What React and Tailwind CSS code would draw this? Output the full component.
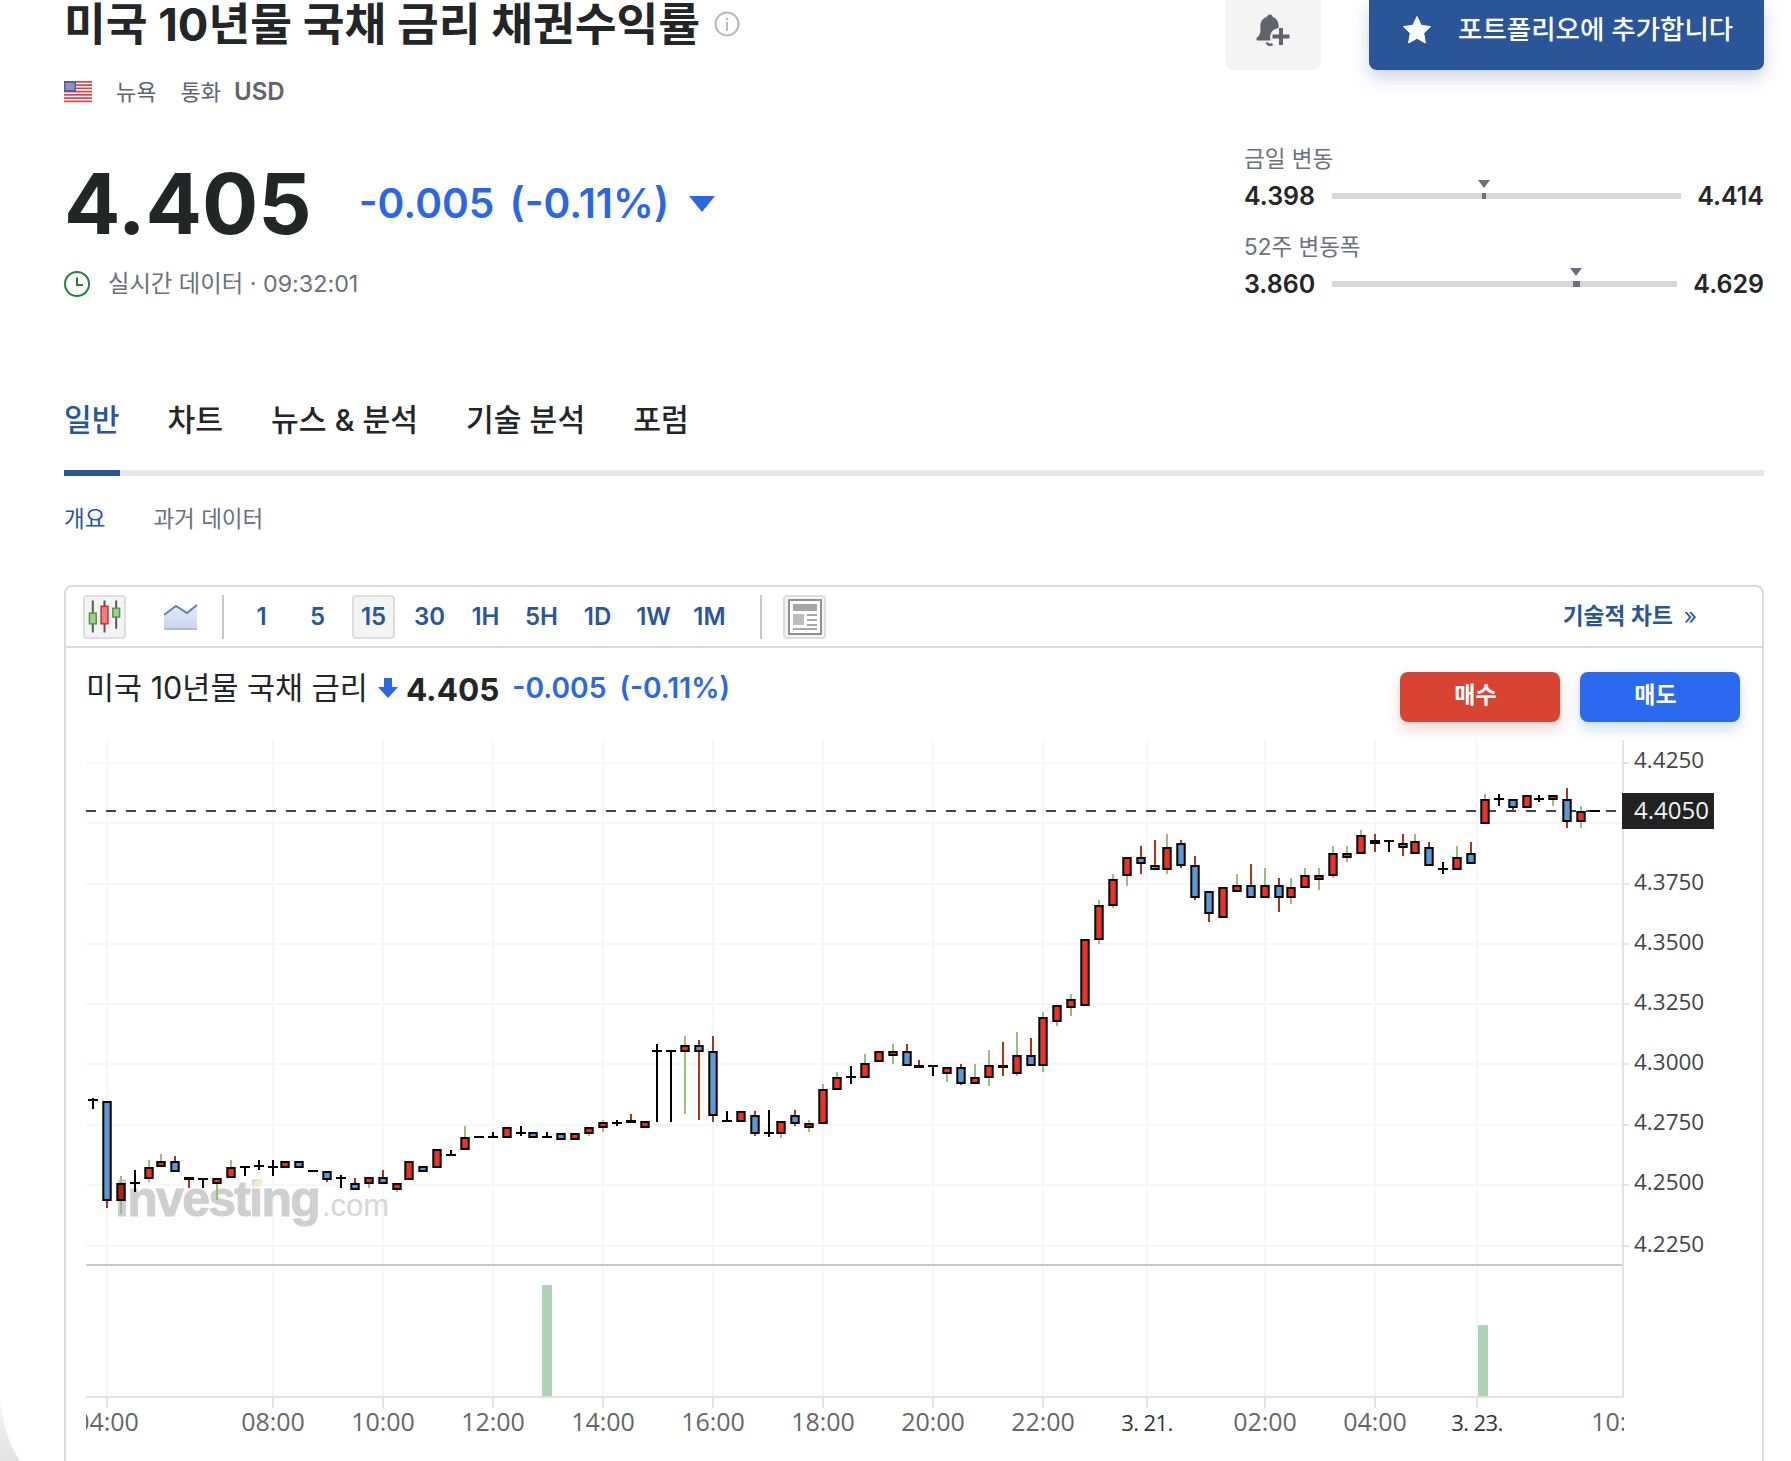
const tabs = [
  { label: '일반', active: true },
  { label: '차트' },
  { label: '뉴스 & 분석' },
  { label: '기술 분석' },
  { label: '포럼' }
]

const intervals = ['1', '5', '15', '30', '1H', '5H', '1D', '1W', '1M']

const yTicks = [
  { label: '4.4250', y: 763, dy: 5 },
  { label: '4.3750', y: 884, dy: 6 },
  { label: '4.3500', y: 944, dy: 6 },
  { label: '4.3250', y: 1004, dy: 6 },
  { label: '4.3000', y: 1064, dy: 6 },
  { label: '4.2750', y: 1125, dy: 5 },
  { label: '4.2500', y: 1185, dy: 5 },
  { label: '4.2250', y: 1246, dy: 6 }
]

const xTicks = [
  { label: '04:00', x: 107 },
  { label: '08:00', x: 273 },
  { label: '10:00', x: 383 },
  { label: '12:00', x: 493 },
  { label: '14:00', x: 603 },
  { label: '16:00', x: 713 },
  { label: '18:00', x: 823 },
  { label: '20:00', x: 933 },
  { label: '22:00', x: 1043 },
  { label: '3. 21.', x: 1147 },
  { label: '02:00', x: 1265 },
  { label: '04:00', x: 1375 },
  { label: '3. 23.', x: 1477 },
  { label: '10:00', x: 1623 }
]

const fills = { R: '#ee3124', D: '#ad2414', B: '#5b9bd5', K: '#000' }
const wicks = { r: '#a9341d', g: '#95c07f', k: '#000' }

// [body, top, bottom, wickTop, wickBottom, wickColor]
const candles = [
  ['K', 1099, 1101, 1098, 1109, 'k'], ['B', 1101, 1201, 1101, 1208, 'r'], ['D', 1183, 1201, 1176, 1214, 'g'],
  ['K', 1182, 1184, 1170, 1192, 'k'], ['R', 1167, 1179, 1160, 1182, 'g'], ['R', 1161, 1167, 1154, 1167, 'g'],
  ['B', 1161, 1172, 1156, 1172, 'r'], ['K', 1177, 1180, 1177, 1188, 'r'], ['K', 1178, 1180, 1178, 1188, 'k'],
  ['R', 1178, 1184, 1178, 1200, 'g'], ['R', 1167, 1178, 1160, 1178, 'g'], ['K', 1166, 1168, 1166, 1176, 'k'],
  ['K', 1165, 1167, 1160, 1170, 'k'], ['K', 1166, 1168, 1160, 1176, 'k'], ['R', 1161, 1168], ['B', 1161, 1168],
  ['K', 1170, 1172], ['B', 1171, 1180, 1171, 1182, 'r'], ['K', 1177, 1179, 1175, 1188, 'k'],
  ['B', 1183, 1190, 1178, 1190, 'r'], ['R', 1177, 1184, 1177, 1188, 'g'], ['B', 1177, 1184, 1170, 1184, 'r'],
  ['R', 1183, 1190, 1183, 1192, 'g'], ['R', 1161, 1180], ['B', 1166, 1172], ['R', 1149, 1168],
  ['K', 1154, 1156, 1150, 1156, 'k'], ['R', 1137, 1150, 1126, 1150, 'g'], ['K', 1136, 1138],
  ['K', 1136, 1138, 1132, 1138, 'k'], ['R', 1127, 1138], ['K', 1132, 1134, 1126, 1136, 'k'], ['B', 1132, 1138],
  ['K', 1136, 1138, 1132, 1138, 'k'], ['B', 1133, 1140], ['R', 1133, 1140], ['R', 1127, 1134, 1127, 1136, 'g'],
  ['R', 1122, 1128, 1120, 1132, 'g'], ['K', 1122, 1124, 1120, 1126, 'k'], ['K', 1120, 1123, 1114, 1123, 'r'],
  ['R', 1121, 1128], ['K', 1050, 1052, 1044, 1122, 'k'], ['K', 1050, 1052, 1050, 1122, 'k'],
  ['R', 1045, 1052, 1036, 1114, 'g'], ['B', 1045, 1052, 1040, 1120, 'r'], ['B', 1051, 1116, 1036, 1122, 'r'],
  ['K', 1120, 1122, 1111, 1122, 'k'], ['R', 1111, 1122], ['B', 1115, 1134, 1111, 1136, 'r'],
  ['K', 1132, 1134, 1110, 1137, 'k'], ['R', 1121, 1134, 1121, 1138, 'g'], ['B', 1115, 1124, 1110, 1126, 'r'],
  ['R', 1123, 1128, 1120, 1132, 'g'], ['R', 1089, 1124, 1084, 1124, 'g'], ['R', 1077, 1090, 1072, 1090, 'g'],
  ['K', 1076, 1078, 1066, 1084, 'k'], ['R', 1063, 1078, 1054, 1078, 'g'], ['R', 1051, 1062],
  ['R', 1051, 1056, 1044, 1064, 'g'], ['B', 1051, 1066, 1044, 1066, 'r'], ['K', 1065, 1068, 1060, 1068, 'r'],
  ['K', 1065, 1067, 1065, 1076, 'k'], ['R', 1067, 1074, 1067, 1082, 'g'], ['B', 1067, 1084, 1064, 1085, 'r'],
  ['R', 1077, 1084, 1064, 1084, 'g'], ['R', 1065, 1078, 1050, 1086, 'g'], ['K', 1065, 1068, 1042, 1076, 'r'],
  ['R', 1055, 1074, 1032, 1076, 'g'], ['B', 1055, 1066, 1038, 1066, 'r'], ['R', 1017, 1066, 1012, 1072, 'g'],
  ['R', 1005, 1022, 1005, 1026, 'g'], ['R', 999, 1008, 994, 1016, 'g'], ['R', 939, 1006],
  ['R', 905, 940, 900, 944, 'g'], ['R', 879, 906, 874, 908, 'g'], ['R', 857, 876, 857, 886, 'g'],
  ['B', 857, 864, 846, 874, 'r'], ['B', 865, 870, 840, 870, 'r'], ['R', 847, 870, 834, 874, 'g'],
  ['B', 843, 866, 840, 868, 'r'], ['B', 865, 898, 856, 900, 'r'], ['B', 891, 914, 891, 922, 'r'], ['R', 887, 918],
  ['R', 885, 892, 874, 892, 'g'], ['B', 885, 898, 864, 898, 'r'], ['R', 885, 898, 868, 898, 'g'],
  ['B', 885, 898, 878, 912, 'r'], ['R', 887, 898, 878, 904, 'g'], ['R', 875, 888, 868, 888, 'g'],
  ['R', 875, 880, 868, 890, 'g'], ['R', 853, 876, 846, 878, 'g'], ['R', 853, 858, 846, 862, 'g'],
  ['R', 835, 854, 830, 854, 'g'], ['K', 840, 844, 834, 852, 'r'], ['K', 840, 842, 840, 852, 'k'],
  ['B', 843, 848, 834, 856, 'r'], ['R', 841, 854, 834, 854, 'g'], ['B', 847, 866, 842, 866, 'r'],
  ['K', 868, 870, 862, 874, 'k'], ['R', 857, 870, 846, 870, 'g'], ['B', 853, 864, 842, 864, 'r'],
  ['R', 799, 824, 794, 824, 'g'], ['K', 798, 800, 794, 806, 'k'], ['B', 799, 808, 799, 811, 'r'], ['R', 795, 808],
  ['K', 798, 800, 795, 802, 'k'], ['R', 795, 800, 795, 806, 'g'], ['B', 799, 822, 788, 828, 'r'],
  ['R', 811, 822, 806, 828, 'g'], ['K', 810, 812]
]

const shortSteps = [4, 13, 22, 31, 40, 49, 59, 68, 77, 86, 95, 104]

function candleX(i) {
  let x = 93
  for (let n = 0; n < i; n++) x += shortSteps.includes(n) ? 12 : 14
  return x
}

function Candle({ data, x }) {
  const [body, top, bottom, wickTop, wickBottom, wickColor] = data
  return (
    <g>
      {wickColor && <rect x={x - 1} y={wickTop} width="2" height={wickBottom - wickTop} fill={wicks[wickColor]} />}
      {body === 'K' ? (
        <rect x={x - 5} y={top} width="10" height={bottom - top} fill="#000" />
      ) : (
        <rect x={x - 3.7} y={top + 1} width="7.4" height={bottom - top - 2} fill={fills[body]} stroke="#000" strokeWidth="2" />
      )}
    </g>
  )
}

function Chart() {
  const axisFont = "'Open Sans', sans-serif"
  return (
    <svg width="1697" height="721" viewBox="66 740 1697 721" className="block">
      <defs>
        <clipPath id="plot-clip">
          <rect x="86" y="740" width="1538" height="721" />
        </clipPath>
      </defs>

      {/* grid */}
      {xTicks.slice(0, -1).map(t => (
        <rect key={t.x} x={t.x - 1} y="740" width="2" height="657" fill="#f6f6f7" />
      ))}
      {[...yTicks, { y: 823 }].map(t => (
        <rect key={t.y} x="86" y={t.y - 1} width="1536" height="2" fill="#f6f6f7" />
      ))}

      {/* watermark */}
      <text x="115" y="1216" fontFamily="'Liberation Sans', sans-serif" fontWeight="700" fontSize="50" letterSpacing="-1.7" fill="#cfcfcf" stroke="#cfcfcf" strokeWidth="1">investing</text>
      <text x="322" y="1216" fontFamily="'Liberation Sans', sans-serif" fontSize="31" fill="#d6d6d6">.com</text>
      <polygon points="254,1182 262,1178 262,1185 253,1188" fill="#f9e8c6" />

      {/* last price line */}
      <line x1="86" y1="811" x2="1622" y2="811" stroke="#444" strokeWidth="2" strokeDasharray="10 10" />

      {candles.map((c, i) => (
        <Candle key={i} data={c} x={candleX(i)} />
      ))}

      {/* volume */}
      <rect x="86" y="1264" width="1537" height="2" fill="#c9c9c9" />
      <rect x="542" y="1285" width="10" height="112" fill="#afd4b5" />
      <rect x="1478" y="1325" width="10" height="72" fill="#afd4b5" />

      {/* axes */}
      <rect x="1622" y="740" width="2" height="658" fill="#e1e3e8" />
      <rect x="86" y="1396" width="1538" height="2" fill="#e1e3e8" />
      {yTicks.map(t => (
        <g key={t.label}>
          <rect x="1624" y={t.y - 1} width="5" height="2" fill="#e1e3e8" />
          <text x="1634" y={t.y + t.dy} fontFamily={axisFont} fontSize="22.500" fill="#444">{t.label}</text>
        </g>
      ))}
      <rect x="1622" y="793" width="92" height="36" fill="#222" />
      <text x="1634" y="819" fontFamily={axisFont} fontSize="24" fill="#f2f2f2">4.4050</text>

      <g clipPath="url(#plot-clip)">
        {xTicks.map(t => (
          <g key={t.x}>
            {t.x < 1600 && <rect x={t.x - 1} y="1398" width="2" height="10" fill="#e1e3e8" />}
            {t.label.startsWith('3.') ? (
              <text x={t.x} y="1431" textAnchor="middle" fontFamily={axisFont} fontSize="22" letterSpacing="-0.6" fill="#333">{t.label}</text>
            ) : (
              <text x={t.x} y="1431" textAnchor="middle" fontFamily={axisFont} fontSize="25" fill="#666">{t.label}</text>
            )}
          </g>
        ))}
      </g>
    </svg>
  )
}

function InfoIcon() {
  return (
    <svg width="26" height="26" viewBox="0 0 26 26" fill="none" className="shrink-0 mt-[11px]">
      <circle cx="13" cy="13" r="11.5" stroke="#b5b8bd" strokeWidth="2" />
      <circle cx="13" cy="8" r="1.3" fill="#b5b8bd" />
      <rect x="12" y="11" width="2" height="9" fill="#b5b8bd" />
    </svg>
  )
}

function UsFlag() {
  const stripes = [0, 1, 2, 3, 4, 5, 6]
  return (
    <svg width="28" height="22" viewBox="0 0 28 22" className="shrink-0">
      <rect width="28" height="22" fill="#fff" />
      {stripes.map(n => (
        <rect key={n} y={n * 3.25} width="28" height="1.7" fill="#d9414f" />
      ))}
      <rect width="12" height="11" fill="#5a5a96" />
      <rect x="1.5" y="2" width="9" height="7" fill="#a5a5c8" opacity="0.7" />
    </svg>
  )
}

function ClockIcon() {
  return (
    <svg width="26" height="26" viewBox="0 0 26 26" fill="none" className="shrink-0">
      <circle cx="13" cy="13" r="12" stroke="#25803a" strokeWidth="2" />
      <path d="M13 6.5V14h6" stroke="#25803a" strokeWidth="2" />
    </svg>
  )
}

function BellPlusIcon() {
  return (
    <svg width="34" height="34" viewBox="0 0 34 34">
      <path d="M14 1.5c1.6 0 2.6 1 2.8 2.6 3.8 1.2 5.8 4.6 5.8 8.6v2.2a9.5 9.5 0 0 0-8 12.6H2c-1.6 0-2.2-1.8-1-2.9 2.4-2 3.4-4 3.4-7.7v-4c0-4.3 2.4-7.7 6.4-8.8.2-1.6 1.6-2.6 3.2-2.6z" fill="#5f636d" />
      <path d="M10.500 29.500a4 4 0 0 0 6 1.500" stroke="#5f636d" strokeWidth="2.500" fill="none" />
      <path d="M25 15v17M16.500 23.500h17" stroke="#5f636d" strokeWidth="4" />
    </svg>
  )
}

function StarIcon() {
  return (
    <svg width="30" height="30" viewBox="0 0 30 30">
      <path d="M15 1.500l4.200 8.800 9.300 1.300-6.800 6.700 1.700 9.700-8.400-4.700-8.400 4.700 1.700-9.700-6.800-6.700 9.300-1.300z" fill="#fff" stroke="#fff" strokeLinejoin="round" />
    </svg>
  )
}

function CandlesIcon() {
  return (
    <svg width="40" height="40" viewBox="0 0 40 40">
      <path d="M8 3v33M20 3v33M32 3v29" stroke="#555" strokeWidth="2" />
      <rect x="4.500" y="16" width="7" height="11" fill="#9fd08f" stroke="#4c9a3c" strokeWidth="1.500" />
      <rect x="16.500" y="9" width="7" height="18" fill="#f27f7f" stroke="#b3342c" strokeWidth="1.500" />
      <rect x="28.500" y="11" width="7" height="9" fill="#9fd08f" stroke="#4c9a3c" strokeWidth="1.500" />
    </svg>
  )
}

function LineIcon() {
  return (
    <svg width="34" height="26" viewBox="0 0 34 26">
      <defs>
        <linearGradient id="line-fill" x1="0" y1="0" x2="0" y2="1">
          <stop offset="0" stopColor="#e6ecf8" />
          <stop offset="1" stopColor="#c6d4ee" />
        </linearGradient>
      </defs>
      <path d="M0 11 12 2l11 7L33 1v24H0z" fill="url(#line-fill)" />
      <path d="M0 11 12 2l11 7L33 1" stroke="#5b82c2" strokeWidth="2" fill="none" />
      <rect y="24" width="33" height="2" fill="#b6bdc9" />
    </svg>
  )
}

function NewsIcon() {
  return (
    <svg width="34" height="36" viewBox="0 0 34 36">
      <rect x="1" y="1" width="32" height="34" fill="#fff" stroke="#8f8f8f" strokeWidth="2" />
      <rect x="5" y="5" width="24" height="7" fill="#a6a6a6" />
      <rect x="5" y="15" width="11" height="11" fill="#bcbcbc" />
      <path d="M19 16h10M19 21h10M19 26h10M5 30h24" stroke="#a6a6a6" strokeWidth="2" />
    </svg>
  )
}

function RangeRow({ low, high, barClass, markerClass, pointerClass }) {
  return (
    <div className="flex items-center h-[26px] text-[25px] leading-[26px] font-semibold text-[#232526]">
      <span className="w-[72px] shrink-0">{low}</span>
      <div className={`relative h-[6px] ml-4 bg-[#d6d8da] ${barClass}`}>
        <div className={`absolute top-0 h-[6px] bg-[#6a6e78] ${markerClass}`} />
        <svg width="12" height="8" viewBox="0 0 12 8" className={`absolute -top-[13px] ${pointerClass}`}>
          <path d="M0 0h12L6 8z" fill="#6a6e78" />
        </svg>
      </div>
      <span className="ml-auto">{high}</span>
    </div>
  )
}

export default function App() {
  return (
    <div className="relative w-[1791px] h-[1461px] overflow-hidden bg-white text-[#232526] font-['Inter','Noto_Sans_CJK_KR',sans-serif]">
      <div className="pl-[64px] pr-[27px]">
        {/* Instrument header */}
        <div className="flex justify-between h-[296px]">
          <div>
            <div className="flex items-start gap-[14px] h-[44px]">
              <h1 className="pt-[3px] text-[45.4px] leading-[44px] font-bold whitespace-nowrap">미국 10년물 국채 금리 채권수익률</h1>
              <InfoIcon />
            </div>
            <div className="flex items-center h-[24px] mt-[36px] text-[22px] text-[#5f636d]">
              <UsFlag />
              <span className="ml-6">뉴욕</span>
              <span className="ml-6">통화</span>
              <span className="ml-[13px] text-[24px] font-semibold">USD</span>
            </div>
            <div className="flex items-center h-[96px] mt-[52px]">
              <span className="text-[83.5px] leading-[96px] font-bold">4.405</span>
              <div className="flex gap-[15px] ml-[47px] text-[40.7px] font-semibold text-[#2b66e6] whitespace-nowrap">
                <span>-0.005</span>
                <span>(-0.11%)</span>
              </div>
              <svg width="26" height="16" viewBox="0 0 26 16" className="ml-[20px]">
                <path d="M0 0h26L13 16z" fill="#2b66e6" />
              </svg>
            </div>
            <div className="flex items-center h-[26px] mt-[19px] gap-[18px] text-[23.3px] text-[#6b707b]">
              <ClockIcon />
              <span>실시간 데이터 · 09:32:01</span>
            </div>
          </div>

          <div className="w-[539px]">
            <div className="flex justify-end gap-12 h-[70px]">
              <button className="flex items-center justify-center w-[96px] h-[70px] pb-[10px] rounded-b-lg bg-[#f4f4f5]">
                <BellPlusIcon />
              </button>
              <button className="flex items-center gap-[26px] w-[395px] h-[70px] pl-[33px] pb-[10px] rounded-b-lg bg-[#2a5599] text-white text-[26.5px] font-medium shadow-[0_8px_18px_rgba(42,85,153,0.25)] whitespace-nowrap">
                <StarIcon />
                포트폴리오에 추가합니다
              </button>
            </div>
            <div className="ml-[19px]">
              <div className="mt-[76px] h-[26px] text-[22.5px] leading-[26px] text-[#6b707b]">금일 변동</div>
              <div className="mt-[11px]">
                <RangeRow low="4.398" high="4.414" barClass="w-[349px]" markerClass="left-[150px] w-1" pointerClass="left-[146px]" />
              </div>
              <div className="mt-[25px] h-[26px] text-[22.5px] leading-[26px] text-[#6b707b]">52주 변동폭</div>
              <div className="mt-[11px]">
                <RangeRow low="3.860" high="4.629" barClass="w-[345px]" markerClass="left-[241px] w-[7px]" pointerClass="left-[238px]" />
              </div>
            </div>
          </div>
        </div>

        {/* Tabs */}
        <nav className="flex gap-[48px] mt-[104px] border-b-[6px] border-[#e6e7e9]">
          {tabs.map(tab => (
            <a
              key={tab.label}
              className={`-mb-[6px] pb-[30px] border-b-[6px] text-[30.2px] leading-[40px] font-medium whitespace-nowrap ${
                tab.active ? 'border-[#2a5599] text-[#2a5599]' : 'border-transparent text-[#232526]'
              }`}
            >
              {tab.label}
            </a>
          ))}
        </nav>
        <div className="flex gap-[48px] h-[30px] mt-[28px] text-[22.5px] leading-[30px]">
          <a className="text-[#2a5599]">개요</a>
          <a className="text-[#6b707b]">과거 데이터</a>
        </div>

        {/* Chart card */}
        <div className="mt-[51px] h-[890px] border-2 border-[#d9dadc] rounded-t-lg">
          <div className="flex items-center h-[61px] pl-[17px] pr-[65px] border-b-2 border-[#d9dadc]">
            <button className="flex items-center justify-center w-[43px] h-[44px] rounded bg-[#f4f4f5] border-2 border-[#dcdddf]">
              <CandlesIcon />
            </button>
            <button className="flex items-center justify-center w-[43px] h-[44px] ml-[33px]">
              <LineIcon />
            </button>
            <div className="w-[2px] h-[44px] ml-5 bg-[#c4c6c9]" />
            <div className="flex gap-[13px] ml-4">
              {intervals.map(item => (
                <button
                  key={item}
                  className={`w-[43px] h-[44px] rounded text-[24px] font-semibold text-[#2a5599] ${
                    item === '15' ? 'bg-[#f4f4f5] border-2 border-[#dcdddf]' : ''
                  }`}
                >
                  {item}
                </button>
              ))}
            </div>
            <div className="w-[2px] h-[44px] ml-[29px] bg-[#c4c6c9]" />
            <button className="flex items-center justify-center w-[43px] h-[44px] ml-[21px] rounded bg-[#f4f4f5] border-2 border-[#dcdddf]">
              <NewsIcon />
            </button>
            <a className="flex items-center gap-[11px] ml-auto text-[22.7px] font-semibold text-[#2a5599] whitespace-nowrap">
              기술적 차트
              <span className="font-normal">»</span>
            </a>
          </div>

          <div className="flex justify-between items-start h-[92px] pt-5 pl-5 pr-[22px]">
            <div className="flex items-center h-[40px]">
              <span className="text-[30.5px] leading-[40px] whitespace-nowrap">미국 10년물 국채 금리</span>
              <svg width="20" height="20" viewBox="0 0 20 20" className="ml-[10px]">
                <path d="M6 0h8v9h6L10 20 0 9h6z" fill="#2b66e6" />
              </svg>
              <span className="ml-2 mt-1 text-[31.5px] font-bold">4.405</span>
              <div className="flex gap-[13px] ml-[13px] text-[28.2px] font-semibold text-[#2b66e6] whitespace-nowrap">
                <span>-0.005</span>
                <span>(-0.11%)</span>
              </div>
            </div>
            <div className="flex gap-5 mt-1">
              <button className="w-[160px] h-[50px] pr-[9px] pb-1 rounded-lg bg-[#d94432] text-white text-[23px] font-semibold shadow-[0_6px_14px_rgba(217,68,50,0.25)]">매수</button>
              <button className="w-[160px] h-[50px] pr-[9px] pb-1 rounded-lg bg-[#2b6aee] text-white text-[23px] font-semibold shadow-[0_6px_14px_rgba(43,106,238,0.25)]">매도</button>
            </div>
          </div>

          <Chart />
        </div>
      </div>

      {/* window corner of the original capture */}
      <svg width="24" height="70" viewBox="0 0 24 70" className="absolute left-0 bottom-0">
        <defs>
          <linearGradient id="corner-fill" x1="0" y1="0" x2="0" y2="1">
            <stop offset="0" stopColor="#fff" />
            <stop offset="0.5" stopColor="#ececec" />
            <stop offset="1" stopColor="#e2e2e2" />
          </linearGradient>
        </defs>
        <path d="M0 0C1 30 8 52 20 70H0z" fill="url(#corner-fill)" />
      </svg>
    </div>
  )
}
